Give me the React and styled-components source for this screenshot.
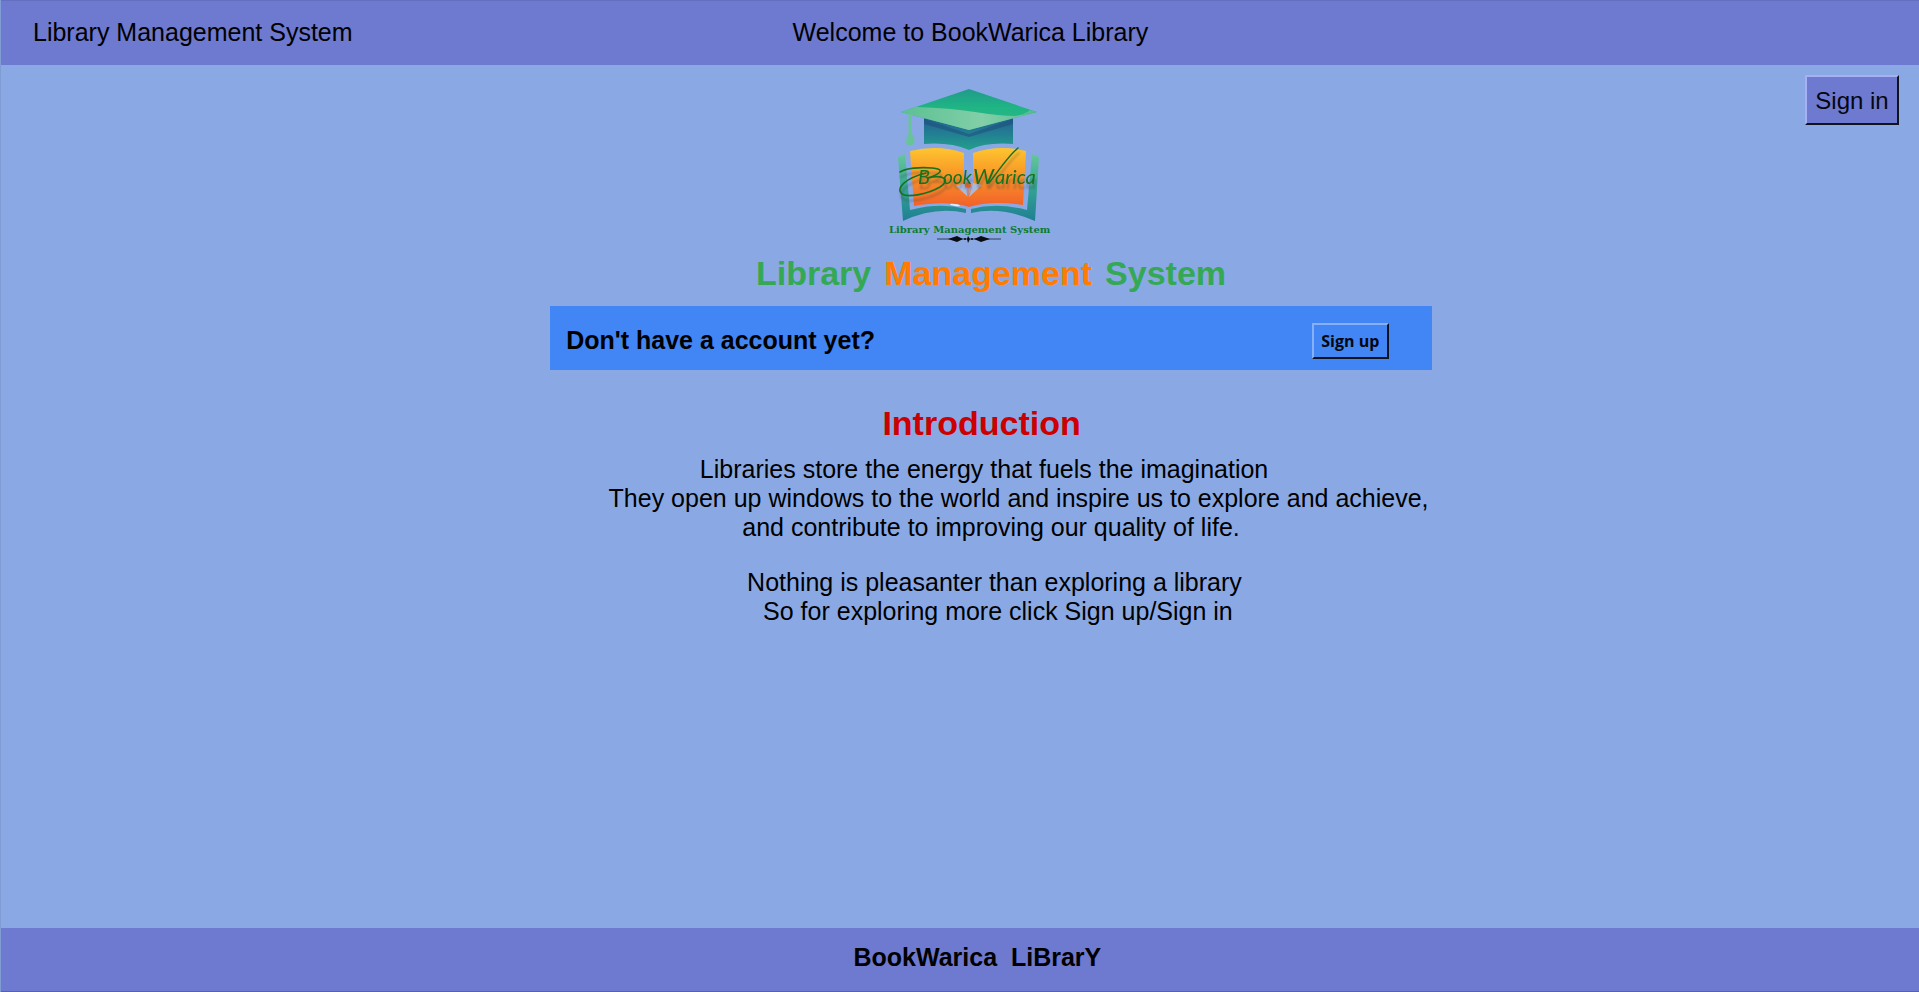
import React from 'react';
import styled, { createGlobalStyle } from 'styled-components';

const GlobalStyle = createGlobalStyle`
  * { box-sizing: border-box; }
  body {
    margin: 0;
    background: #8aa9e4;
    color: #000;
    font-family: "Liberation Sans", Arial, sans-serif;
    font-size: 25px;
    line-height: 29px;
  }
  h1, h2, p { margin: 0; }
`;

const Page = styled.div`
  min-height: 100vh;
  display: flex;
  flex-direction: column;
  border-left: 1px solid #7f9cd5;
`;

const TopBar = styled.header`
  display: grid;
  grid-template-columns: 1fr auto 1fr;
  align-items: center;
  padding: 17px 32px 18px;
  background: #6e79d0;
  border-top: 1px solid #656fbf;
`;

const BarText = styled.span`
  white-space: pre;
`;

const Main = styled.main`
  flex: 1;
`;

const Hero = styled.section`
  display: grid;
  grid-template-columns: 1fr auto 1fr;
  align-items: start;
  padding: 10px 20px 0;
`;

const Button = styled.button`
  padding: 0;
  border: 2px solid;
  border-color: ${(p) => p.$light} #11131f #11131f ${(p) => p.$light};
  border-radius: 0;
  color: #05070f;
  background: ${(p) => p.$face};
  cursor: pointer;
`;

const SignIn = styled(Button)`
  grid-column: 3;
  justify-self: end;
  width: 94px;
  height: 50px;
  font: 24px/29px "Liberation Sans", Arial, sans-serif;
`;

const SignUp = styled(Button)`
  width: 77px;
  height: 36px;
  font: 700 16px/20px "Open Sans", "Noto Sans", sans-serif;
`;

const LogoArt = styled.svg`
  grid-column: 2;
  display: block;
  width: 199px;
  height: 178px;
`;

const Content = styled.div`
  display: flex;
  flex-direction: column;
  align-items: center;
  padding-left: 62px;
`;

const Title = styled.h1`
  display: flex;
  gap: 13px;
  font-size: 34px;
  line-height: 40px;
  color: #34a853;
`;

const Accent = styled.span`
  color: #ff7c00;
`;

const Banner = styled.section`
  display: flex;
  justify-content: space-between;
  align-items: center;
  width: 47.5%;
  min-width: 480px;
  height: 64px;
  margin-top: 13px;
  padding: 5px 43px 0 16px;
  background: #4285f4;
  font-weight: bold;
`;

const Subtitle = styled.h2`
  margin: 33px 0 12px;
  font-size: 34px;
  line-height: 40px;
  color: #cc0000;
  white-space: pre;
`;

const Paragraph = styled.p`
  margin-bottom: 26px;
  text-align: center;
  white-space: pre;
`;

const Footer = styled.footer`
  padding: 15px 0 19px;
  background: #6e79d0;
  border-bottom: 1px solid #6a5c90;
  text-align: center;
  font-weight: bold;
  white-space: pre;
`;

const Signature = styled.g`
  fill: #17721d;
  font-family: Lato, sans-serif;
  font-style: italic;
  filter: drop-shadow(1px 5px 1px rgba(60, 60, 60, 0.35));
`;

function Logo() {
  return (
    <LogoArt viewBox="1 0 199 178" role="img" aria-label="BookWarica Library Management System">
      <defs>
        <linearGradient id="cap" x1="0" y1="0" x2="0" y2="1">
          <stop offset="0" stopColor="#219a8c" />
          <stop offset="0.45" stopColor="#1fb584" />
          <stop offset="1" stopColor="#35b58a" />
        </linearGradient>
        <linearGradient id="brim" x1="0" y1="0" x2="1" y2="0">
          <stop offset="0" stopColor="#5cc092" />
          <stop offset="0.6" stopColor="#82cfa8" />
          <stop offset="1" stopColor="#58bd92" />
        </linearGradient>
        <linearGradient id="base" x1="0" y1="0" x2="0" y2="1">
          <stop offset="0" stopColor="#23608f" />
          <stop offset="0.5" stopColor="#237f93" />
          <stop offset="1" stopColor="#22a08b" />
        </linearGradient>
        <linearGradient id="leaf" x1="0" y1="0" x2="0" y2="1">
          <stop offset="0" stopColor="#fec52f" />
          <stop offset="0.4" stopColor="#f99b28" />
          <stop offset="1" stopColor="#f2602a" />
        </linearGradient>
        <linearGradient id="cover" x1="0" y1="0" x2="0" y2="1">
          <stop offset="0" stopColor="#66c69c" />
          <stop offset="0.5" stopColor="#35a494" />
          <stop offset="1" stopColor="#1f7f93" />
        </linearGradient>
      </defs>

      <path d="M64 43H153V69Q126 67 109 75Q90 67 64 69Z" fill="url(#base)" />
      <path d="M64 44L109 59L153 44V49L109 62L64 49Z" fill="#1f4f7d" opacity="0.55" />
      <path d="M109 14L177 37L109 55L41 37Z" fill="url(#cap)" />
      <path d="M41 37L56 32Q90 33 115 37T155 41L177 37L109 55Z" fill="url(#brim)" />
      <path d="M155 41Q166 39 170 35L177 37Z" fill="#58bd92" />
      <path d="M50 39V61" stroke="#66c498" strokeWidth="3" />
      <path d="M49 59H52C56 64 55 70 51 70H49C45 70 45 64 49 59Z" fill="#66c498" />

      <path d="M38 82L45 79L50 135Q80 127 106 134V138Q75 131 43 146Z" fill="url(#cover)" />
      <path d="M179 82L172 79L167 135Q137 127 111 134V138Q142 131 175 146Z" fill="url(#cover)" />
      <path d="M50 76Q78 69 104 78V108L108 122L113 108V78Q139 69 166 76L163 130Q131 125 109 132Q87 125 54 131Z" fill="url(#leaf)" />
      <path d="M96 111L104 108L108 122ZM122 110L113 108L109 122Z" fill="#a9badf" />
      <circle cx="108" cy="110" r="3" fill="#f06a2a" />
      <path d="M108 110V122" stroke="#f06a2a" strokeWidth="1" />
      <ellipse cx="95" cy="130" rx="5" ry="1" fill="#d6f1f0" transform="rotate(8 95 130)" />

      <Signature>
        <text y="109">
          <tspan x="58" fontSize="20">B</tspan>
          <tspan x="83" fontSize="19">ook</tspan>
          <tspan x="113" fontSize="22">W</tspan>
          <tspan x="135" fontSize="20">arica</tspan>
        </text>
        <g fill="none" stroke="#17721d" strokeLinecap="round">
          <path d="M40 97C46 93 60 92 72 93S83 98 68 103C84 99 91 105 80 112C68 119 48 123 42 119C35 113 46 103 66 98" strokeWidth="1.6" />
          <path d="M129 108C137 98 148 81 158 73" strokeWidth="1.6" />
        </g>
      </Signature>

      <text x="29" y="158" fontFamily="DejaVu Serif, serif" fontWeight="bold" fontSize="10" fill="#0b7c2b">
        Library Management System
      </text>
      <g fill="#080b12">
        <path d="M77 164H141" stroke="#303b55" strokeWidth="1" />
        <path d="M88 164L97 161L103 164L97 167ZM114 164L121 161L130 164L121 167Z" />
        <circle cx="105" cy="164" r="1" />
        <circle cx="112" cy="164" r="1" />
        <path d="M108 161L110 164L108 168L107 164Z" />
      </g>
    </LogoArt>
  );
}

export default function App() {
  return (
    <>
      <GlobalStyle />
      <Page>
        <TopBar>
          <BarText>Library Management System</BarText>
          <BarText>{'   Welcome to BookWarica Library'}</BarText>
        </TopBar>
        <Main>
          <Hero>
            <Logo />
            <SignIn type="button" $face="#6e79d0" $light="#a8b0f5">Sign in</SignIn>
          </Hero>
          <Content>
            <Title>
              <span>Library</span>
              <Accent>Management</Accent>
              <span>System</span>
            </Title>
            <Banner>
              <span>Don't have a account yet?</span>
              <SignUp type="button" $face="#4285f4" $light="#86b0fa">Sign up</SignUp>
            </Banner>
            <Subtitle>{'Introduction  '}</Subtitle>
            <Paragraph>
              {'Libraries store the energy that fuels the imagination  \n'}
              {'        They open up windows to the world and inspire us to explore and achieve,\n'}
              {'and contribute to improving our quality of life.'}
            </Paragraph>
            <Paragraph>
              {' Nothing is pleasanter than exploring a library\n'}
              {'  So for exploring more click Sign up/Sign in'}
            </Paragraph>
          </Content>
        </Main>
        <Footer>{'     BookWarica  LiBrarY'}</Footer>
      </Page>
    </>
  );
}
